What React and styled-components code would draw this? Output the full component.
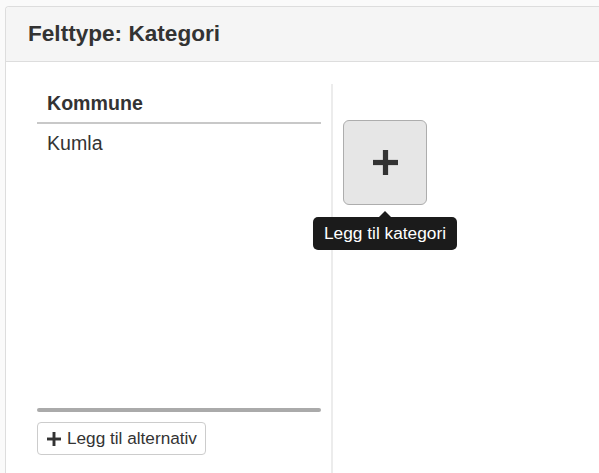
import styled, { createGlobalStyle } from "styled-components";

const GlobalStyle = createGlobalStyle`
    html, body {
        margin: 0;
        padding: 0;
        height: 473px;
        background: #fafafa;
        overflow: hidden;
        font-family: "Liberation Sans", Arial, sans-serif;
        color: #333;
    }
`

const Page = styled.div`
    padding: 6px 0 0 5px;
`

const Panel = styled.div`
    width: 620px;
    height: 480px;
    box-sizing: border-box;
    background: #fff;
    border: 1px solid #ddd;
    border-bottom: none;
    border-radius: 4px 4px 0 0;
    display: flex;
    flex-direction: column;
`

const PanelHeader = styled.div`
    height: 54px;
    flex-shrink: 0;
    background: #f5f5f5;
    border-bottom: 1px solid #ddd;
    border-radius: 4px 4px 0 0;
    display: flex;
    align-items: center;
    padding-left: 22px;
`

const Title = styled.h3`
    margin: 0;
    font-size: 22.6px;
    font-weight: bold;
    color: #333;
`

const PanelBody = styled.div`
    flex: 1;
    display: flex;
    padding: 22px 0 0 31px;
`

const Column = styled.div`
    width: 284px;
    padding-right: 10px;
    border-right: 2px solid #ececec;
    display: flex;
    flex-direction: column;
`

const List = styled.div`
    height: 324px;
`

const ListHead = styled.div`
    padding: 8px 10px;
    line-height: 22px;
    font-size: 19.6px;
    font-weight: bold;
    border-bottom: 2px solid #c8c8c8;
`

const ListItem = styled.div`
    padding: 8px 10px;
    line-height: 22px;
    font-size: 19.6px;
`

const Bar = styled.div`
    height: 4px;
    border-radius: 2px;
    background: #aaa;
`

const SmallButton = styled.button`
    align-self: flex-start;
    margin-top: 10px;
    height: 33px;
    display: flex;
    align-items: center;
    gap: 6px;
    padding: 0 8px 0 9px;
    background: #fff;
    border: 1px solid #ccc;
    border-radius: 4px;
    font-family: inherit;
    font-size: 17.2px;
    color: #333;
    svg {
        width: 14px;
        height: 14px;
    }
`

const AddArea = styled.div`
    padding: 36px 0 0 10px;
`

const AddWrap = styled.div`
    position: relative;
    width: 84px;
`

const BigButton = styled.button`
    width: 84px;
    height: 85px;
    display: flex;
    align-items: center;
    justify-content: center;
    background: #e6e6e6;
    border: 1px solid #adadad;
    border-radius: 6px;
    padding: 0;
    svg {
        width: 25px;
        height: 25px;
    }
`

const Tooltip = styled.div`
    position: absolute;
    top: 97px;
    left: 50%;
    transform: translateX(-50%);
    white-space: nowrap;
    background: #1b1b1b;
    color: #fff;
    font-size: 17.3px;
    line-height: 33px;
    padding: 0 11px;
    border-radius: 5px;
    &::before {
        content: "";
        position: absolute;
        top: -6px;
        left: 50%;
        margin-left: -6px;
        border-left: 6px solid transparent;
        border-right: 6px solid transparent;
        border-bottom: 6px solid #1b1b1b;
    }
`

const Plus = ({ thick }) => (
    <svg viewBox="0 0 24 24" aria-hidden="true">
        <rect x={12 - thick / 2} y="0" width={thick} height="24" fill="#333" />
        <rect x="0" y={12 - thick / 2} width="24" height={thick} fill="#333" />
    </svg>
)

export default function App() {
    return (
        <Page>
            <GlobalStyle />
            <Panel>
                <PanelHeader>
                    <Title>Felttype: Kategori</Title>
                </PanelHeader>
                <PanelBody>
                    <Column>
                        <List>
                            <ListHead>Kommune</ListHead>
                            <ListItem>Kumla</ListItem>
                        </List>
                        <Bar />
                        <SmallButton>
                            <Plus thick={5} />
                            Legg til alternativ
                        </SmallButton>
                    </Column>
                    <AddArea>
                        <AddWrap>
                            <BigButton>
                                <Plus thick={5} />
                            </BigButton>
                            <Tooltip>Legg til kategori</Tooltip>
                        </AddWrap>
                    </AddArea>
                </PanelBody>
            </Panel>
        </Page>
    );
}
